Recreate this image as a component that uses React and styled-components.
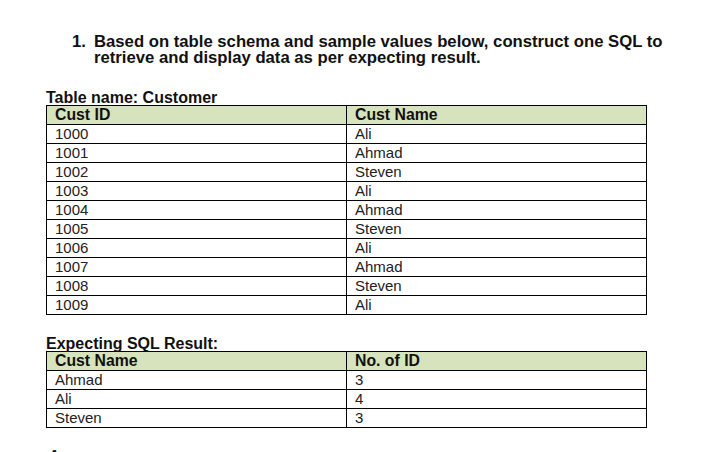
import React from "react";
import styled, { createGlobalStyle } from "styled-components";

const Global = createGlobalStyle`
  html, body { margin: 0; padding: 0; background: #fff; }
  body { font-family: "Liberation Sans", Arial, Helvetica, sans-serif; color: #1a1a1a; overflow: hidden; }
`;

const Page = styled.div`
  width: 702px;
  height: 452px;
  overflow: hidden;
  box-sizing: border-box;
  padding: 34px 0 0 46px;
`;

const Question = styled.div`
  display: flex;
  margin-left: 26px;
  width: 604px;
  font-weight: bold;
  font-size: 16.7px;
  line-height: 16px;
  color: #111;
`;

const Num = styled.span`
  flex: 0 0 22px;
`;

const Label = styled.div`
  font-weight: bold;
  font-size: 16px;
  line-height: 15px;
  color: #111;
  margin-top: ${(p) => p.$top}px;
`;

const Table = styled.table`
  border-collapse: collapse;
  width: 601px;
  table-layout: fixed;
  font-size: 15px;
`;

const Th = styled.th`
  background: #d6e3bc;
  border: 1px solid #000;
  text-align: left;
  font-weight: bold;
  font-size: 15.8px;
  color: #111;
  padding: 0 0 0 8px;
  height: 18px;
  line-height: 18px;
`;

const Td = styled.td`
  border: 1px solid #000;
  padding: 0 0 0 8px;
  height: 18px;
  line-height: 18px;
  color: #222;
`;

const Cut = styled.div`
  margin-top: 19px;
  padding-left: 3px;
  font-size: 15px;
  line-height: 15px;
  font-weight: bold;
`;

const customers = [
  ["1000", "Ali"],
  ["1001", "Ahmad"],
  ["1002", "Steven"],
  ["1003", "Ali"],
  ["1004", "Ahmad"],
  ["1005", "Steven"],
  ["1006", "Ali"],
  ["1007", "Ahmad"],
  ["1008", "Steven"],
  ["1009", "Ali"],
];

const results = [
  ["Ahmad", "3"],
  ["Ali", "4"],
  ["Steven", "3"],
];

function DataTable({ head, rows }) {
  return (
    <Table>
      <thead>
        <tr>
          {head.map((h) => (
            <Th key={h}>{h}</Th>
          ))}
        </tr>
      </thead>
      <tbody>
        {rows.map((r, i) => (
          <tr key={i}>
            {r.map((c, j) => (
              <Td key={j}>{c}</Td>
            ))}
          </tr>
        ))}
      </tbody>
    </Table>
  );
}

export default function App() {
  return (
    <>
      <Global />
      <Page>
        <Question>
          <Num>1.</Num>
          <span>
            Based on table schema and sample values below, construct one SQL to
            retrieve and display data as per expecting result.
          </span>
        </Question>
        <Label $top={24}>Table name: Customer</Label>
        <DataTable head={["Cust ID", "Cust Name"]} rows={customers} />
        <Label $top={21}>Expecting SQL Result:</Label>
        <DataTable head={["Cust Name", "No. of ID"]} rows={results} />
        <Cut>Answer:</Cut>
      </Page>
    </>
  );
}
